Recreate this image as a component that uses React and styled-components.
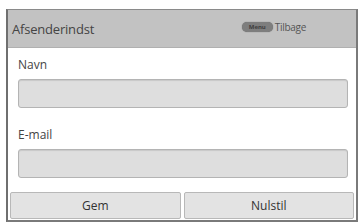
import styled, { createGlobalStyle } from "styled-components";

const GlobalStyle = createGlobalStyle`
  body {
    margin: 0;
    background: #ffffff;
    font-family: "Open Sans", "Liberation Sans", sans-serif;
  }
`;

const App = () => {
  return (
    <>
      <GlobalStyle />
      <Panel>
        <Header>
          <Title>Afsenderindst</Title>
          <Back>
            <MenuKey>Menu</MenuKey>
            <BackText>Tilbage</BackText>
          </Back>
        </Header>
        <Body>
          <Field>
            <Label>Navn</Label>
            <Input />
          </Field>
          <Field>
            <Label>E-mail</Label>
            <Input />
          </Field>
        </Body>
        <ButtonRow>
          <Button>Gem</Button>
          <Button>Nulstil</Button>
        </ButtonRow>
      </Panel>
    </>
  );
};

const Panel = styled.div`
  box-sizing: border-box;
  margin: 9px 0 0 6px;
  width: 352px;
  height: 213px;
  border: 1px solid #8a8a8a;
  border-left: 2px solid #6f6f6f;
  border-right: 2px solid #7a7a7a;
  border-bottom: 2px solid #7a7a7a;
  background: #ffffff;
  display: flex;
  flex-direction: column;
`;

const Header = styled.div`
  height: 37px;
  flex-shrink: 0;
  background: #c2c2c2;
  border-bottom: 1px solid #b0b0b0;
  display: flex;
  align-items: center;
  justify-content: space-between;
  padding: 0 50px 0 4px;
`;

const Title = styled.span`
  font-size: 13px;
  color: #444444;
  letter-spacing: -0.2px;
`;

const Back = styled.div`
  display: flex;
  align-items: center;
  gap: 2px;
  margin-top: -4px;
`;

const MenuKey = styled.span`
  background: #7e7e7e;
  color: #3e3e3e;
  font-size: 6px;
  font-weight: 700;
  border-radius: 5px;
  padding: 1px 7px;
  line-height: 8px;
  box-shadow: 0 0 1px #5a5a5a;
`;

const BackText = styled.span`
  font-size: 10px;
  color: #555555;
  letter-spacing: -0.3px;
`;

const Body = styled.div`
  flex: 1;
  display: flex;
  flex-direction: column;
  gap: 19px;
  padding: 9px 8px 0 10px;
`;

const Field = styled.div`
  display: flex;
  flex-direction: column;
`;

const Label = styled.span`
  font-size: 12px;
  color: #444444;
  line-height: 16px;
  margin-bottom: 6px;
`;

const Input = styled.div`
  box-sizing: border-box;
  height: 29px;
  background: #dedede;
  border: 1px solid #b4b4b4;
  border-radius: 3px;
  box-shadow: inset 0 1px 1px #c8c8c8;
`;

const ButtonRow = styled.div`
  display: flex;
  gap: 3px;
  padding: 0 2px 1px 2px;
  flex-shrink: 0;
`;

const Button = styled.div`
  box-sizing: border-box;
  flex: 1;
  height: 27px;
  background: #e3e3e3;
  border: 1px solid #b8b8b8;
  border-radius: 2px;
  display: flex;
  align-items: center;
  justify-content: center;
  font-size: 12px;
  color: #333333;
`;

export default App;
